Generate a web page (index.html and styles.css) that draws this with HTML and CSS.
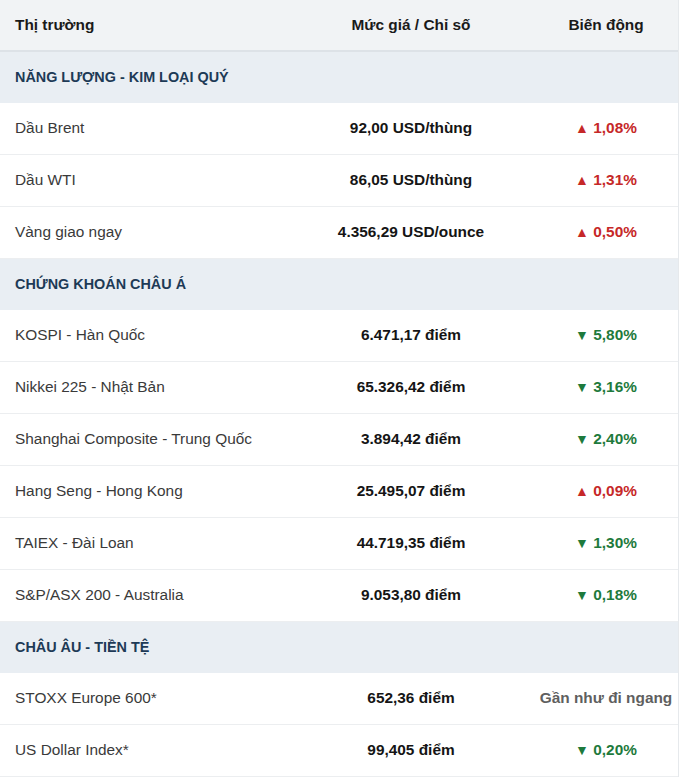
FILE: index.html
```html
<!DOCTYPE html>
<html lang="vi">
<head>
<meta charset="utf-8">
<title>Thị trường</title>
<link rel="stylesheet" href="styles.css">
</head>
<body>
<div class="wrap">
<table class="mkt">
  <colgroup><col class="c1"><col class="c2"><col class="c3"></colgroup>
  <thead>
    <tr><th class="name">Thị trường</th><th>Mức giá / Chỉ số</th><th>Biến động</th></tr>
  </thead>
  <tbody>
    <tr class="sec"><td colspan="3">NĂNG LƯỢNG - KIM LOẠI QUÝ</td></tr>
    <tr><td class="name">Dầu Brent</td><td class="val">92,00 USD/thùng</td><td class="chg up"><span class="tri">▲</span> 1,08%</td></tr>
    <tr><td class="name">Dầu WTI</td><td class="val">86,05 USD/thùng</td><td class="chg up"><span class="tri">▲</span> 1,31%</td></tr>
    <tr><td class="name">Vàng giao ngay</td><td class="val">4.356,29 USD/ounce</td><td class="chg up"><span class="tri">▲</span> 0,50%</td></tr>
    <tr class="sec"><td colspan="3">CHỨNG KHOÁN CHÂU Á</td></tr>
    <tr><td class="name">KOSPI - Hàn Quốc</td><td class="val">6.471,17 điểm</td><td class="chg down"><span class="tri">▼</span> 5,80%</td></tr>
    <tr><td class="name">Nikkei 225 - Nhật Bản</td><td class="val">65.326,42 điểm</td><td class="chg down"><span class="tri">▼</span> 3,16%</td></tr>
    <tr><td class="name">Shanghai Composite - Trung Quốc</td><td class="val">3.894,42 điểm</td><td class="chg down"><span class="tri">▼</span> 2,40%</td></tr>
    <tr><td class="name">Hang Seng - Hong Kong</td><td class="val">25.495,07 điểm</td><td class="chg up"><span class="tri">▲</span> 0,09%</td></tr>
    <tr><td class="name">TAIEX - Đài Loan</td><td class="val">44.719,35 điểm</td><td class="chg down"><span class="tri">▼</span> 1,30%</td></tr>
    <tr><td class="name">S&amp;P/ASX 200 - Australia</td><td class="val">9.053,80 điểm</td><td class="chg down"><span class="tri">▼</span> 0,18%</td></tr>
    <tr class="sec"><td colspan="3">CHÂU ÂU - TIỀN TỆ</td></tr>
    <tr><td class="name">STOXX Europe 600*</td><td class="val">652,36 điểm</td><td class="chg flat">Gần như đi ngang</td></tr>
    <tr><td class="name">US Dollar Index*</td><td class="val">99,405 điểm</td><td class="chg down"><span class="tri">▼</span> 0,20%</td></tr>
  </tbody>
</table>
</div>
</body>
</html>
```
FILE: styles.css
```css
html, body {
  margin: 0;
  padding: 0;
  background: #ffffff;
}
body {
  font-family: "Liberation Sans", Arial, sans-serif;
  font-size: 15.4px;
  color: #333333;
}
.wrap {
  width: 678px;
  border-right: 1px solid #e6e9ec;
}
.mkt {
  width: 678px;
  border-collapse: collapse;
  table-layout: fixed;
}
.c1 { width: 288px; }
.c2 { width: 246px; }
.c3 { width: 144px; }
.mkt th {
  background: #f1f3f5;
  color: #1a1a1a;
  font-weight: bold;
  text-align: center;
  line-height: 18px;
  height: 18px;
  padding: 16px 0 16px;
  border-bottom: 2px solid #dde2e7;
}
.mkt th.name {
  text-align: left;
  padding-left: 15px;
}
.mkt td {
  line-height: 18px;
  height: 18px;
  padding: 16px 0 17px;
  border-bottom: 1px solid #eceef0;
  text-align: center;
  white-space: nowrap;
}
.mkt td.name {
  text-align: left;
  padding-left: 15px;
  color: #3a3a3a;
}
.mkt td.val {
  font-weight: bold;
  color: #151515;
}
.mkt td.chg {
  font-weight: bold;
}
.mkt .up { color: #c62828; }
.mkt .down { color: #1e7a3c; }
.mkt .flat { color: #5f5f5f; }
.tri {
  font-size: 14px;
  line-height: 0;
}
.mkt tr.sec td {
  background: #e9eef3;
  color: #1d3a56;
  font-weight: bold;
  font-size: 14.4px;
  text-align: left;
  padding: 16px 0 17px 15px;
  border-bottom: 0;
}
```
